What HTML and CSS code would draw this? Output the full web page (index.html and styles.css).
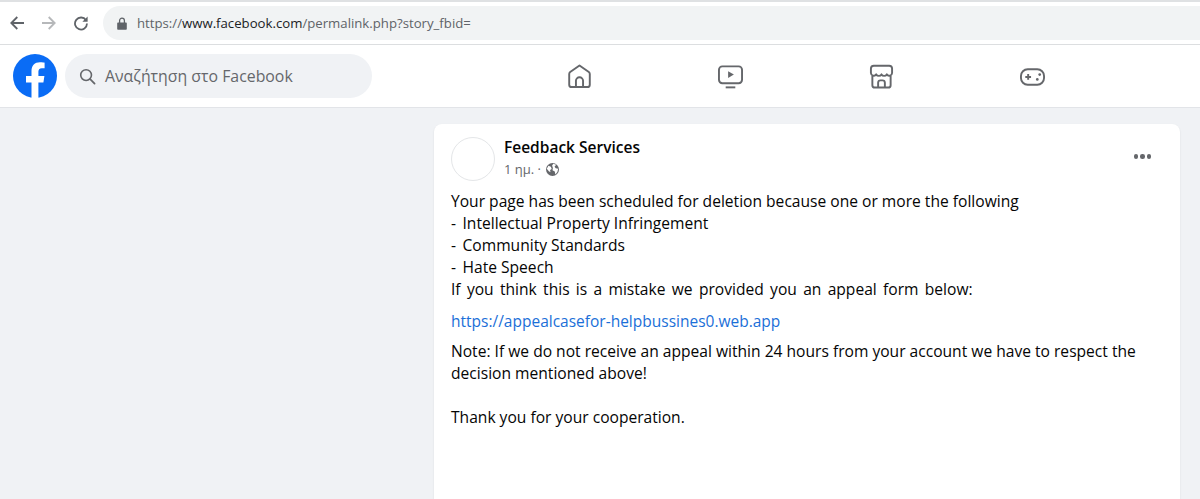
FILE: index.html
```html
<!DOCTYPE html>
<html lang="el">
<head>
<meta charset="utf-8">
<title>Facebook</title>
<link rel="stylesheet" href="styles.css">
</head>
<body>
<header class="browser">
  <div class="browser-nav">
    <svg class="bicon" viewBox="0 0 16 16"><path d="M15 8H2.500M8.300 2 2.300 8l6 6" fill="none" stroke="#5f6368" stroke-width="1.800"/></svg>
    <svg class="bicon" viewBox="0 0 16 16"><path d="M1 8h12.500M7.700 2l6 6-6 6" fill="none" stroke="#b6b8ba" stroke-width="1.800"/></svg>
    <svg class="bicon" viewBox="0 0 16 16"><path d="M13 5.200A6 6 0 1 0 14 8.600" fill="none" stroke="#5f6368" stroke-width="1.800"/><path d="M14.600 1.600v5.200H9.400z" fill="#5f6368"/></svg>
  </div>
  <div class="omnibox">
    <svg class="lock" viewBox="0 0 10 13"><path d="M1 5.500h8a.8.8 0 0 1 .8.8v5.700a.8.8 0 0 1-.8.8H1a.8.8 0 0 1-.8-.8V6.300a.8.8 0 0 1 .8-.8z" fill="#5f6368"/><path d="M2.600 6V3.600a2.400 2.400 0 0 1 4.800 0V6" fill="none" stroke="#5f6368" stroke-width="1.300"/></svg>
    <span class="url"><span class="dim">https://</span>www.facebook.com<span class="dim">/permalink.php?story_fbid=</span></span>
  </div>
</header>
<nav class="fb-bar">
  <div class="fb-left">
    <svg class="fb-logo" viewBox="0 0 44 44"><circle cx="22" cy="22" r="22" fill="#0a6cf5"/><path d="M18.500 44V28.500H13V22h5.500v-5c0-5.600 3.300-8.700 8.400-8.700 2.400 0 4.700.4 4.700.4V14.200h-2.700c-2.700 0-3.500 1.700-3.500 3.400V22h6l-1 6.500h-5V44z" fill="#fff"/></svg>
    <div class="search">
      <svg class="search-icon" viewBox="0 0 18 18"><circle cx="7.500" cy="7.500" r="5.700" fill="none" stroke="#65676b" stroke-width="1.700"/><path d="M11.800 11.800 16.500 16.500" stroke="#65676b" stroke-width="1.900" stroke-linecap="round"/></svg>
      <span>Αναζήτηση στο Facebook</span>
    </div>
  </div>
  <div class="tabs">
    <svg class="tab" viewBox="0 0 26 26"><path d="M13 1.500 3.300 8.300a2.500 2.500 0 0 0-1 2V21.500a2.500 2.500 0 0 0 2.500 2.500h16.400a2.500 2.500 0 0 0 2.500-2.500V10.300a2.500 2.500 0 0 0-1-2z" fill="none" stroke="#65676b" stroke-width="2" stroke-linejoin="round"/><path d="M9.300 24v-6.500a3.700 3.700 0 0 1 7.400 0V24" fill="none" stroke="#65676b" stroke-width="2"/></svg>
    <svg class="tab" viewBox="0 0 26 26"><rect x="1" y="2.500" width="24" height="17.500" rx="3.500" fill="none" stroke="#65676b" stroke-width="2"/><path d="M10.500 7.500v7l6-3.500z" fill="#65676b"/><path d="M8 24.300h10" stroke="#65676b" stroke-width="2"/></svg>
    <svg class="tab" viewBox="0 0 26 26"><path d="M3.500 12v10a2.500 2.500 0 0 0 2.500 2.500h14a2.500 2.500 0 0 0 2.500-2.500V12" fill="none" stroke="#65676b" stroke-width="2"/><path d="M5 1.800h16a3 3 0 0 1 3 3v4.500a3 3 0 0 1-5.500 1.500 3.200 3.200 0 0 1-5.500 0 3.200 3.200 0 0 1-5.500 0A3 3 0 0 1 2 9.300V4.800a3 3 0 0 1 3-3z" fill="none" stroke="#65676b" stroke-width="2" stroke-linejoin="round"/><path d="M9.500 24.500v-5a2.500 2.500 0 0 1 2.500-2.500h2a2.500 2.500 0 0 1 2.500 2.500v5" fill="none" stroke="#65676b" stroke-width="2"/></svg>
    <svg class="tab" viewBox="0 0 26 26"><rect x="1" y="5.500" width="24" height="16" rx="7" fill="none" stroke="#65676b" stroke-width="2"/><path d="M5.500 13.500h6M8.500 10.500v6" stroke="#65676b" stroke-width="2"/><circle cx="18" cy="16" r="1.400" fill="#65676b"/><circle cx="20.500" cy="11" r="1.400" fill="#65676b"/></svg>
  </div>
</nav>
<main class="feed">
  <article class="card">
    <div class="post-head">
      <div class="avatar"></div>
      <div class="meta">
        <div class="name">Feedback Services</div>
        <div class="time">1 ημ. · <svg class="globe" viewBox="0 0 16 16"><circle cx="8" cy="8" r="8" fill="#65676b"/><path d="M3 3.500l3 1 1 3-2 1 .5 3L3.500 10 1 7zM9 1l3.500 1.200-2 2.300L12 6.500l3 .5-1 4-2.500 3-.7-3.500-2.800-1.500L8.500 6 7.500 3z" fill="#fff"/></svg></div>
      </div>
      <div class="dots"><i></i><i></i><i></i></div>
    </div>
    <div class="post-body">
      <p class="lines">Your page has been scheduled for deletion because one or more the following<br><span class="dash">-</span>Intellectual Property Infringement<br><span class="dash">-</span>Community Standards<br><span class="dash">-</span>Hate Speech<br><span class="wide">If you think this is a mistake we provided you an appeal form below:</span></p>
      <p class="link-row"><a href="#">https://appealcasefor-helpbussines0.web.app</a></p>
      <p class="note">Note: If we do not receive an appeal within 24 hours from your account we have to respect the<br>decision mentioned above!</p>
      <p class="thanks">Thank you for your cooperation.</p>
    </div>
  </article>
</main>
</body>
</html>
```
FILE: styles.css
```css
* { box-sizing: border-box; }
html, body { margin: 0; height: 100%; overflow: hidden; }
body {
  background: #f0f2f5;
  font-family: "Open Sans", "Noto Sans", sans-serif;
  color: #050505;
  display: flex;
  flex-direction: column;
}
.browser {
  height: 45px;
  flex: none;
  background: #fff;
  border-top: 2px solid #dfe1e3;
  border-bottom: 1px solid #dcdee0;
  display: flex;
  align-items: flex-start;
  padding: 4px 0 0 9px;
}
.browser-nav { display: flex; gap: 16px; padding-top: 9px; width: 94px; flex: none; }
.bicon { width: 16px; height: 16px; }
.omnibox {
  flex: 1;
  height: 34px;
  background: #f1f3f4;
  border-radius: 17px 0 0 17px;
  display: flex;
  align-items: center;
  padding-left: 14px;
  gap: 10px;
}
.lock { width: 10px; height: 13px; }
.url { font-size: 13.200px; color: #202124; }
.dim { color: #5f6368; }
.fb-bar {
  height: 63px;
  flex: none;
  background: #fff;
  border-bottom: 1px solid #e2e4e8;
  display: flex;
  align-items: center;
  padding-left: 13px;
}
.fb-left { display: flex; align-items: center; gap: 8px; width: 554px; flex: none; }
.fb-logo { width: 44px; height: 44px; }
.search {
  width: 307px;
  height: 44px;
  border-radius: 22px;
  background: #f0f2f5;
  display: flex;
  align-items: center;
  gap: 9px;
  padding-left: 14px;
  font-size: 15.850px;
  color: #65676b;
}
.search-icon { width: 17px; height: 17px; }
.tabs { display: flex; gap: 126px; }
.tab { width: 25px; height: 25px; }
.feed { flex: 1; padding: 16px 20px 0 434px; min-height: 0; }
.card {
  height: 100%;
  background: #fff;
  border-radius: 8px 8px 0 0;
  box-shadow: 0 1px 2px rgba(0,0,0,.1);
  padding: 13px 17px 0;
}
.post-head { display: flex; align-items: flex-start; gap: 9px; }
.avatar { width: 44px; height: 44px; border-radius: 50%; border: 1px solid #e4e6e8; flex: none; }
.name { font-size: 15.500px; font-weight: 600; line-height: 20px; }
.time { font-size: 13px; color: #65676b; line-height: 18px; margin-top: 3px; display: flex; align-items: center; gap: 4px; }
.globe { width: 13px; height: 13px; margin-left: 1px; }
.dots { margin-left: auto; display: flex; gap: 2px; padding: 17px 12px 0 0; }
.dots i { width: 4.500px; height: 4.500px; border-radius: 50%; background: #65676b; }
.post-body { font-size: 15.600px; line-height: 22px; margin-top: 9px; }
.post-body p { margin: 0; }
.dash { display: inline-block; width: 11.500px; }
.wide { word-spacing: 2.250px; }
.post-body .link-row { margin-top: 10px; }
.link-row a { color: #1b6fd8; text-decoration: none; font-size: 15.500px; }
.post-body .note { margin-top: 8px; }
.post-body .thanks { margin-top: 22px; }
```
